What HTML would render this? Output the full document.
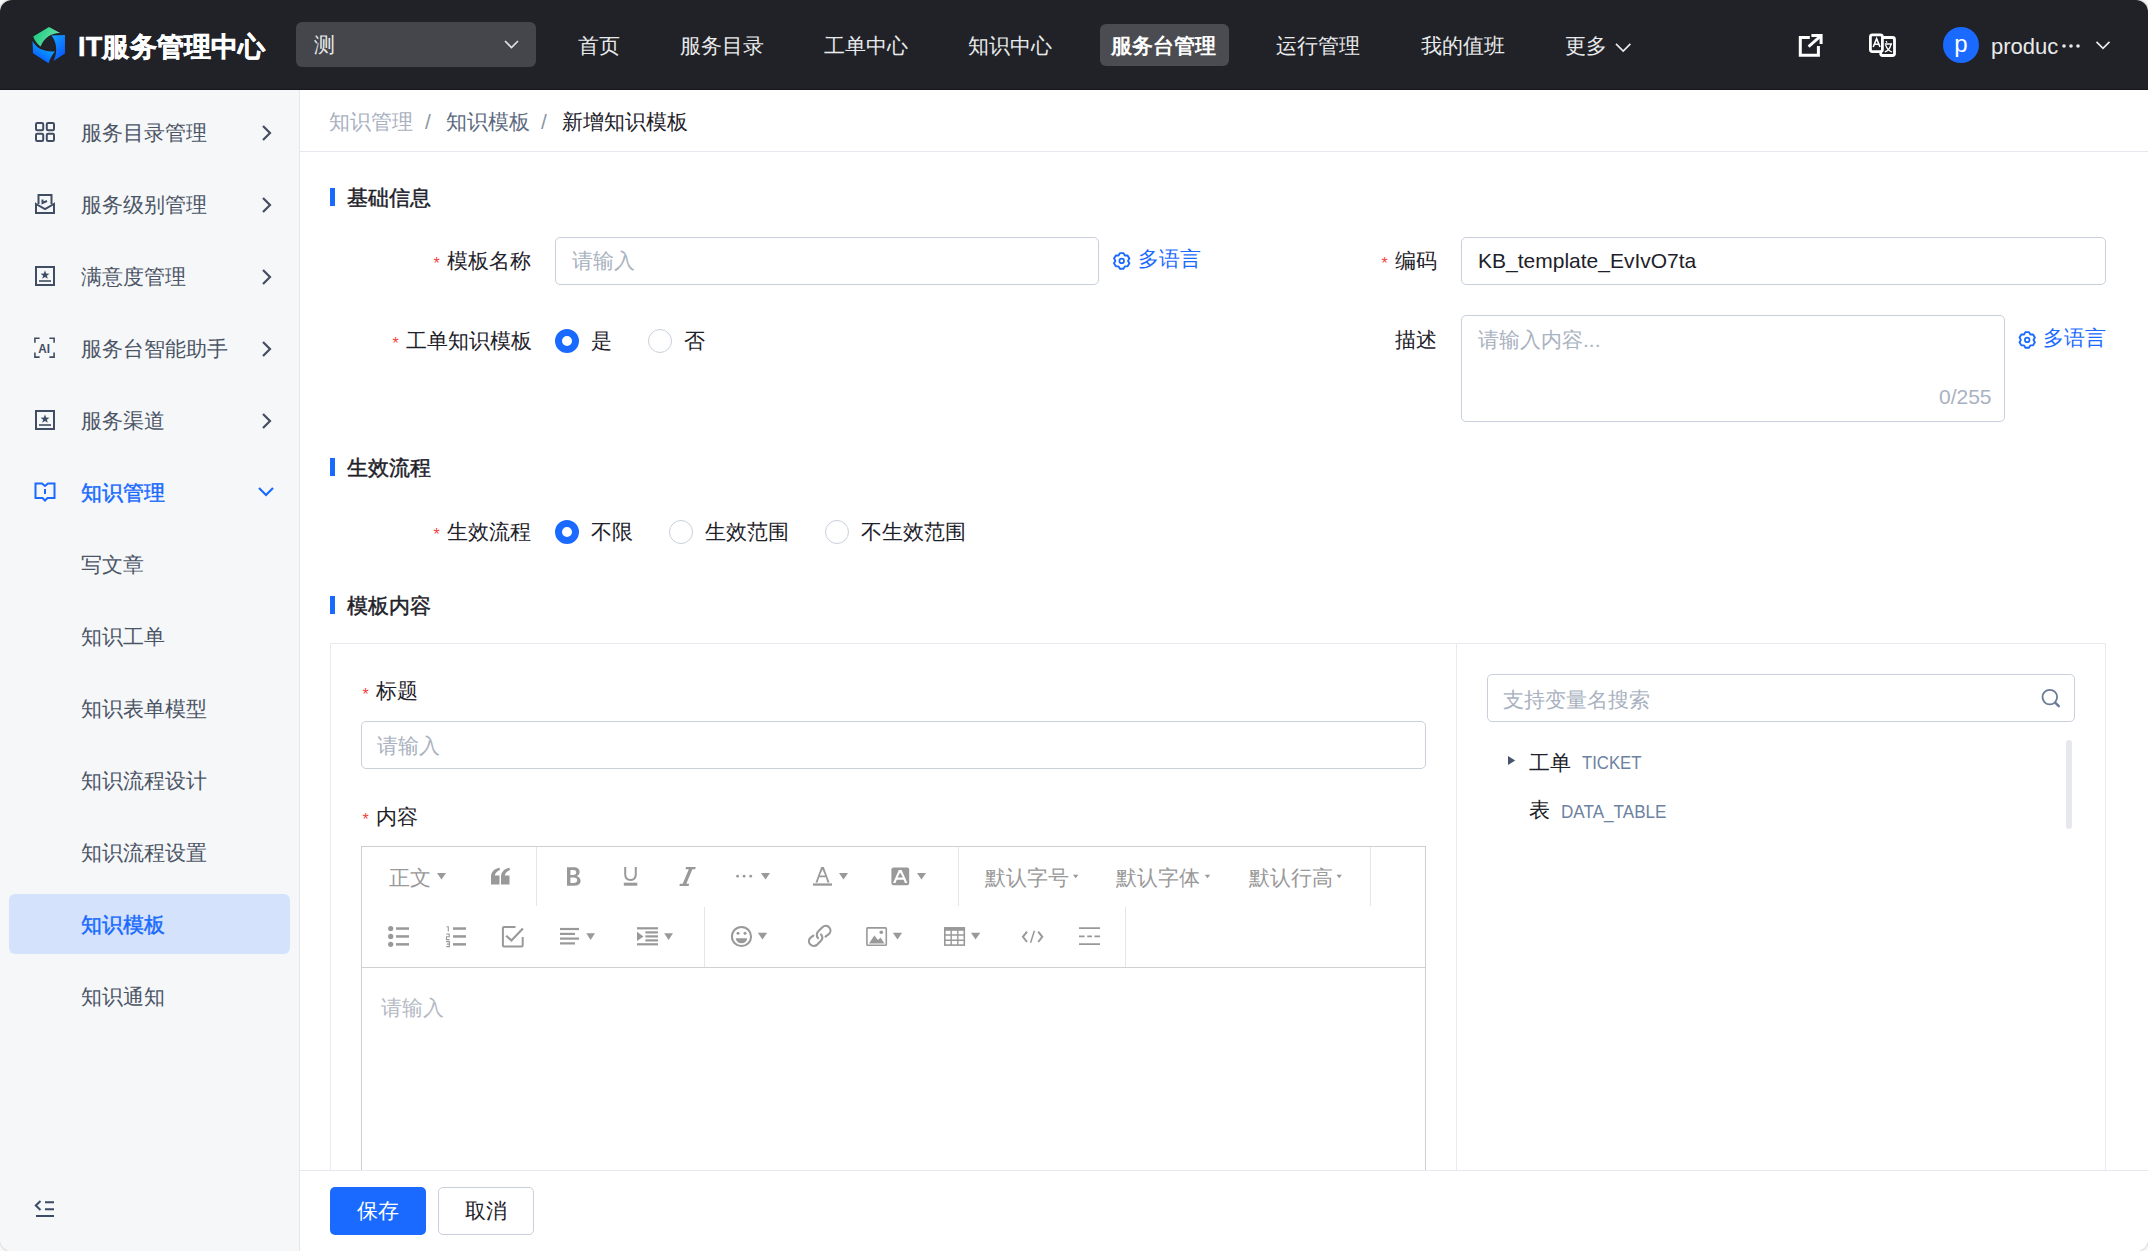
<!DOCTYPE html>
<html><head><meta charset="utf-8">
<style>
*{box-sizing:border-box;margin:0;padding:0}
html,body{width:2148px;height:1251px;overflow:hidden;background:#f8f8f8}
body{font-family:"Liberation Sans",sans-serif;font-size:21px;color:#1d2129}
.win{position:absolute;left:0;top:0;width:2148px;height:1251px;border-radius:12px;overflow:hidden;background:#fff;box-shadow:0 0 1.5px 1px rgba(0,0,0,0.14)}
.a{position:absolute;white-space:nowrap}
.t{height:30px;line-height:30px}
/* header */
.hdr{position:absolute;left:0;top:0;width:2148px;height:90px;background:#212227;border-bottom:1px solid #17181b}
.nav{color:#e9eaec}
.side{position:absolute;left:0;top:90px;width:300px;height:1161px;background:#f6f7f9;border-right:1px solid #e4e7ec}
.si{color:#4b5566}
.blue{color:#1a6aff}
.lbl{color:#1d2129}
.req{color:#f53f3f;font-size:16px;transform:translate(1.5px,2.5px)}
.inp{border:1px solid #c9d0db;border-radius:5px;background:#fff}
.ph{color:#a9b2c0}
.sec-bar{position:absolute;width:5px;height:18px;background:#1a6aff}
.sec-t{color:#1d2129;-webkit-text-stroke:0.45px #1d2129}
.med{-webkit-text-stroke:0.45px #1a6aff}
.radio{position:absolute;width:24px;height:24px;border-radius:50%;border:1px solid #c9d0db;background:#fff}
.radio.on{border:7px solid #1a6aff}
.tb{color:#999;font-size:20.5px}
</style></head><body>
<div class="win">

<!-- HEADER -->
<div class="hdr">
  <svg class="a" style="left:32px;top:27px" width="34" height="37" viewBox="0 0 34 37">
    <defs>
      <linearGradient id="g1" x1="0" y1="0.3" x2="1" y2="0.7"><stop offset="0" stop-color="#1ccb7c"/><stop offset="1" stop-color="#74e4b4"/></linearGradient>
      <linearGradient id="g2" x1="0" y1="0" x2="0.6" y2="1"><stop offset="0" stop-color="#15a6ff"/><stop offset="1" stop-color="#0a58ff"/></linearGradient>
      <linearGradient id="g3" x1="0.8" y1="0.2" x2="0.3" y2="1"><stop offset="0" stop-color="#10b0ff"/><stop offset="1" stop-color="#0552ff"/></linearGradient>
    </defs>
    <path d="M1.2,9.5 L17,0 L28.2,6 C20,5.6 12,10.5 8.6,19.6 C5.2,17 2.6,13.5 1.2,9.5Z" fill="url(#g1)"/>
    <path d="M19.4,8.4 L33,8 V26.6 L21.4,34 C25.6,26 25.2,15 19.4,8.4Z" fill="url(#g2)"/>
    <path d="M0.5,14 C4,21 12,25.2 22.8,24.4 C20,28 17.8,32 16.6,36.2 L1,26.2Z" fill="url(#g3)"/>
  </svg>
  <div class="a" style="left:78px;top:27.5px;height:38px;line-height:38px;font-size:27px;font-weight:700;color:#fff;letter-spacing:0.2px;-webkit-text-stroke:0.5px #fff">IT服务管理中心</div>
  <div class="a" style="left:296px;top:22px;width:240px;height:45px;border-radius:6px;background:#45464b"></div>
  <div class="a nav t" style="left:314px;top:30px">测</div>
  <svg class="a" style="left:500px;top:36px" width="24" height="18" viewBox="500 36 24 18"><path d="M505,41 L511.5,47.5 L518,41" fill="none" stroke="#e1e2e5" stroke-width="1.7"/></svg>

  <div class="a nav t" style="left:578px;top:31px">首页</div>
  <div class="a nav t" style="left:680px;top:31px">服务目录</div>
  <div class="a nav t" style="left:824px;top:31px">工单中心</div>
  <div class="a nav t" style="left:968px;top:31px">知识中心</div>
  <div class="a" style="left:1100px;top:24px;width:129px;height:42px;border-radius:6px;background:#4b4c51"></div>
  <div class="a t" style="left:1111px;top:31px;color:#fff;font-weight:700">服务台管理</div>
  <div class="a nav t" style="left:1276px;top:31px">运行管理</div>
  <div class="a nav t" style="left:1421px;top:31px">我的值班</div>
  <div class="a nav t" style="left:1565px;top:31px">更多</div>
  <svg class="a" style="left:1612px;top:38px" width="24" height="18" viewBox="1612 38 24 18"><path d="M1616,43.8 L1623.2,51 L1630.4,43.8" fill="none" stroke="#e9eaec" stroke-width="1.7"/></svg>

  <svg class="a" style="left:1795px;top:30px" width="32" height="30" viewBox="1795 30 32 30"><path d="M1809.8,37.4 H1800.3 V55.3 H1818.4 V45.9" fill="none" stroke="#fff" stroke-width="3"/><path d="M1811.4,35.4 H1821.1 V43.9" fill="none" stroke="#fff" stroke-width="3"/><path d="M1808.6,46.6 L1820.2,36.4" fill="none" stroke="#fff" stroke-width="2.8"/></svg>
  <svg class="a" style="left:1866px;top:31px" width="33" height="28" viewBox="1866 31 33 28">
    <rect x="1880.7" y="37.5" width="13.8" height="18" rx="2" fill="#212227" stroke="#fff" stroke-width="2.8"/>
    <path d="M1886,41.2 L1887,42.6 M1884.8,44 H1892 M1885.6,45 C1887,49 1889,51 1892,52 M1891,44.5 C1890,48.5 1888,50.8 1884.8,51.8" fill="none" stroke="#fff" stroke-width="1.3"/>
    <rect x="1870.4" y="34.8" width="12" height="16.8" rx="2" fill="#212227" stroke="#fff" stroke-width="2.8"/>
    <path d="M1873.2,47 L1876.6,38.6 L1880,47 M1874.4,44.2 H1878.8" fill="none" stroke="#fff" stroke-width="1.6"/>
  </svg>
  <div class="a" style="left:1943px;top:27px;width:36px;height:36px;border-radius:50%;background:#1a6aff;color:#fff;text-align:center;line-height:33px;font-size:24px">p</div>
  <div class="a nav" style="left:1991px;top:30px;height:34px;line-height:34px;font-size:22px">produc</div>
  <svg class="a" style="left:2058px;top:40px" width="26" height="12" viewBox="2058 40 26 12"><circle cx="2064" cy="46" r="1.8" fill="#e9eaec"/><circle cx="2071" cy="46" r="1.8" fill="#e9eaec"/><circle cx="2078" cy="46" r="1.8" fill="#e9eaec"/></svg>
  <svg class="a" style="left:2094px;top:38px" width="18" height="13" viewBox="2094 38 18 13"><path d="M2096.5,41.8 L2103,48.3 L2109.5,41.8" fill="none" stroke="#e9eaec" stroke-width="1.7"/></svg>
</div>

<!-- SIDEBAR -->
<div class="side"></div>
<!-- sidebar items -->
<svg class="a" style="left:35px;top:122px" width="20" height="20" viewBox="0 0 20 20" fill="none" stroke="#414d63" stroke-width="2"><rect x="1" y="1" width="7.2" height="7.2" rx="1.3"/><rect x="11.8" y="1" width="7.2" height="7.2" rx="1.3"/><rect x="1" y="11.8" width="7.2" height="7.2" rx="1.3"/><rect x="11.8" y="11.8" width="7.2" height="7.2" rx="1.3"/></svg>
<div class="a si t" style="left:81px;top:118px">服务目录管理</div>
<svg class="a chev" style="left:260px;top:124px" width="13" height="18" viewBox="0 0 13 18"><path d="M3 2 L10 9 L3 16" fill="none" stroke="#414d63" stroke-width="2.2"/></svg>

<svg class="a" style="left:35px;top:194px" width="20" height="20" viewBox="0 0 20 20" fill="none" stroke="#414d63" stroke-width="2"><path d="M3.5 10 V1 H16.5 V10"/><path d="M1 10 L10 15 L19 10 V19 H1 Z"/><path d="M7.5 5.5 V9 L12 7" /></svg>
<div class="a si t" style="left:81px;top:190px">服务级别管理</div>
<svg class="a chev" style="left:260px;top:196px" width="13" height="18" viewBox="0 0 13 18"><path d="M3 2 L10 9 L3 16" fill="none" stroke="#414d63" stroke-width="2.2"/></svg>

<svg class="a" style="left:35px;top:266px" width="20" height="20" viewBox="0 0 20 20"><rect x="1" y="1" width="18" height="18" fill="none" stroke="#414d63" stroke-width="2"/><path d="M10 4.5 L11.2 7.6 L14.4 7.7 L11.9 9.7 L12.8 12.8 L10 11 L7.2 12.8 L8.1 9.7 L5.6 7.7 L8.8 7.6Z" fill="#414d63"/><path d="M4 15 H16" stroke="#414d63" stroke-width="1.6"/></svg>
<div class="a si t" style="left:81px;top:262px">满意度管理</div>
<svg class="a chev" style="left:260px;top:268px" width="13" height="18" viewBox="0 0 13 18"><path d="M3 2 L10 9 L3 16" fill="none" stroke="#414d63" stroke-width="2.2"/></svg>

<svg class="a" style="left:34px;top:337px" width="22" height="22" viewBox="0 0 22 22" fill="none" stroke="#414d63" stroke-width="1.6"><path d="M0.9 5.8 V1.2 H5.6 M15.4 1.2 H20.1 V5.8 M20.1 15.4 V20.1 H15.4 M5.6 20.1 H0.9 V15.4"/><text x="4.2" y="15.9" font-size="13.5" font-weight="700" fill="#414d63" stroke="none" font-family="Liberation Sans" textLength="11.7" lengthAdjust="spacingAndGlyphs">AI</text></svg>
<div class="a si t" style="left:81px;top:334px">服务台智能助手</div>
<svg class="a chev" style="left:260px;top:340px" width="13" height="18" viewBox="0 0 13 18"><path d="M3 2 L10 9 L3 16" fill="none" stroke="#414d63" stroke-width="2.2"/></svg>

<svg class="a" style="left:35px;top:410px" width="20" height="20" viewBox="0 0 20 20"><rect x="1" y="1" width="18" height="18" fill="none" stroke="#414d63" stroke-width="2"/><path d="M10 4.5 L11.2 7.6 L14.4 7.7 L11.9 9.7 L12.8 12.8 L10 11 L7.2 12.8 L8.1 9.7 L5.6 7.7 L8.8 7.6Z" fill="#414d63"/><path d="M4 15 H16" stroke="#414d63" stroke-width="1.6"/></svg>
<div class="a si t" style="left:81px;top:406px">服务渠道</div>
<svg class="a chev" style="left:260px;top:412px" width="13" height="18" viewBox="0 0 13 18"><path d="M3 2 L10 9 L3 16" fill="none" stroke="#414d63" stroke-width="2.2"/></svg>

<svg class="a" style="left:34px;top:482px" width="22" height="20" viewBox="0 0 22 20" fill="none" stroke="#1a6aff" stroke-width="2"><path d="M1.5 1.5 H8 L11 4 L14 1.5 H20.5 V16 H13.5 L11 18.5 L8.5 16 H1.5 Z"/><path d="M11 7 V12"/></svg>
<div class="a t blue med" style="left:81px;top:478px">知识管理</div>
<svg class="a" style="left:257px;top:485px" width="18" height="14" viewBox="0 0 18 14"><path d="M2 3 L9 10 L16 3" fill="none" stroke="#1a6aff" stroke-width="2.2"/></svg>

<div class="a si t" style="left:81px;top:550px">写文章</div>
<div class="a si t" style="left:81px;top:622px">知识工单</div>
<div class="a si t" style="left:81px;top:694px">知识表单模型</div>
<div class="a si t" style="left:81px;top:766px">知识流程设计</div>
<div class="a si t" style="left:81px;top:838px">知识流程设置</div>
<div class="a" style="left:9px;top:894px;width:281px;height:60px;border-radius:6px;background:#d4e3fb"></div>
<div class="a t blue med" style="left:81px;top:910px">知识模板</div>
<div class="a si t" style="left:81px;top:982px">知识通知</div>

<svg class="a" style="left:30px;top:1195px" width="30" height="26" viewBox="30 1195 30 26" fill="none" stroke="#3b4a66" stroke-width="2"><path d="M40.5,1201 L35.8,1205.5 L40.5,1210"/><path d="M45,1202.2 H54 M45,1209.2 H54 M36,1216 H54"/></svg>

<!-- MAIN -->
<div class="a" style="left:300px;top:151px;width:1848px;height:1px;background:#e5e8ee"></div>
<div class="a t" style="left:329px;top:107px;color:#a9b1bf">知识管理</div>
<div class="a t" style="left:425px;top:107px;color:#8d96a5">/</div>
<div class="a t" style="left:446px;top:107px;color:#5d6a7e">知识模板</div>
<div class="a t" style="left:541px;top:107px;color:#8d96a5">/</div>
<div class="a t" style="left:562px;top:107px;color:#1d2129">新增知识模板</div>

<!-- section 1 -->
<div class="sec-bar" style="left:330px;top:188px"></div>
<div class="a t sec-t" style="left:347px;top:183px">基础信息</div>

<div class="a t req" style="left:432px;top:246px">*</div>
<div class="a t lbl" style="left:447px;top:246px">模板名称</div>
<div class="a inp" style="left:555px;top:237px;width:544px;height:48px"></div>
<div class="a t ph" style="left:572px;top:246px">请输入</div>
<svg class="a" style="left:1111px;top:250px" width="22" height="22" viewBox="1111 250 22 22"><path d="M1119.90,253.11 L1123.50,253.11 L1124.85,255.44 L1127.55,255.44 L1129.35,258.56 L1128.00,260.90 L1129.35,263.24 L1127.55,266.36 L1124.85,266.36 L1123.50,268.69 L1119.90,268.69 L1118.55,266.36 L1115.85,266.36 L1114.05,263.24 L1115.40,260.90 L1114.05,258.56 L1115.85,255.44 L1118.55,255.44Z" fill="none" stroke="#1a6aff" stroke-width="1.9" stroke-linejoin="round"/><circle cx="1121.7" cy="260.9" r="2.3" fill="none" stroke="#1a6aff" stroke-width="1.7"/></svg>
<div class="a t blue" style="left:1138px;top:244px">多语言</div>

<div class="a t req" style="left:1380px;top:246px">*</div>
<div class="a t lbl" style="left:1395px;top:246px">编码</div>
<div class="a inp" style="left:1461px;top:237px;width:645px;height:48px"></div>
<div class="a t lbl" style="left:1478px;top:246px">KB_template_EvIvO7ta</div>

<div class="a t req" style="left:391px;top:326px">*</div>
<div class="a t lbl" style="left:406px;top:326px">工单知识模板</div>
<div class="radio on" style="left:555px;top:329px"></div>
<div class="a t lbl" style="left:591px;top:326px">是</div>
<div class="radio" style="left:648px;top:329px"></div>
<div class="a t lbl" style="left:684px;top:326px">否</div>

<div class="a t lbl" style="left:1395px;top:325px">描述</div>
<div class="a inp" style="left:1461px;top:315px;width:544px;height:107px"></div>
<div class="a t ph" style="left:1478px;top:325px">请输入内容...</div>
<div class="a t ph" style="left:1939px;top:382px">0/255</div>
<svg class="a" style="left:2016px;top:329px" width="22" height="22" viewBox="2016 329 22 22"><path d="M2025.40,332.11 L2029.00,332.11 L2030.35,334.44 L2033.05,334.44 L2034.85,337.56 L2033.50,339.90 L2034.85,342.24 L2033.05,345.36 L2030.35,345.36 L2029.00,347.69 L2025.40,347.69 L2024.05,345.36 L2021.35,345.36 L2019.55,342.24 L2020.90,339.90 L2019.55,337.56 L2021.35,334.44 L2024.05,334.44Z" fill="none" stroke="#1a6aff" stroke-width="1.9" stroke-linejoin="round"/><circle cx="2027.2" cy="339.9" r="2.3" fill="none" stroke="#1a6aff" stroke-width="1.7"/></svg>
<div class="a t blue" style="left:2043px;top:323px">多语言</div>

<!-- section 2 -->
<div class="sec-bar" style="left:330px;top:458px"></div>
<div class="a t sec-t" style="left:347px;top:453px">生效流程</div>
<div class="a t req" style="left:432px;top:517px">*</div>
<div class="a t lbl" style="left:447px;top:517px">生效流程</div>
<div class="radio on" style="left:555px;top:520px"></div>
<div class="a t lbl" style="left:591px;top:517px">不限</div>
<div class="radio" style="left:669px;top:520px"></div>
<div class="a t lbl" style="left:705px;top:517px">生效范围</div>
<div class="radio" style="left:825px;top:520px"></div>
<div class="a t lbl" style="left:861px;top:517px">不生效范围</div>

<!-- section 3 -->
<div class="sec-bar" style="left:330px;top:596px"></div>
<div class="a t sec-t" style="left:347px;top:591px">模板内容</div>

<div class="a" style="left:330px;top:643px;width:1776px;height:700px;border:1px solid #e8eaef"></div>
<div class="a" style="left:1456px;top:643px;width:1px;height:600px;background:#e8eaef"></div>

<div class="a t req" style="left:361px;top:677px">*</div>
<div class="a t lbl" style="left:376px;top:676px">标题</div>
<div class="a inp" style="left:361px;top:721px;width:1065px;height:48px"></div>
<div class="a t ph" style="left:377px;top:731px">请输入</div>
<div class="a t req" style="left:361px;top:802px">*</div>
<div class="a t lbl" style="left:376px;top:802px">内容</div>

<!-- editor -->
<div id="editor" class="a" style="left:361px;top:846px;width:1065px;height:500px;border:1px solid #cfcfcf"></div>
<div class="a" style="left:362px;top:967px;width:1063px;height:1px;background:#d0d0d0"></div>
<div class="a" style="left:536px;top:847px;width:1px;height:59px;background:#e6e6e6"></div>
<div class="a" style="left:958px;top:847px;width:1px;height:59px;background:#e6e6e6"></div>
<div class="a" style="left:1370px;top:847px;width:1px;height:59px;background:#e6e6e6"></div>
<div class="a" style="left:704px;top:907px;width:1px;height:60px;background:#e6e6e6"></div>
<div class="a" style="left:1125px;top:907px;width:1px;height:60px;background:#e6e6e6"></div>
<div class="a t tb" style="left:389px;top:862.5px">正文</div>
<div class="a t tb" style="left:985px;top:862.5px">默认字号</div>
<div class="a t tb" style="left:1116px;top:862.5px">默认字体</div>
<div class="a t tb" style="left:1249px;top:862.5px">默认行高</div>
<svg class="a" style="left:0;top:0;pointer-events:none" width="2148" height="1251" viewBox="0 0 2148 1251">
<g fill="#999">
  <path d="M437,873 H446 L441.5,879.6Z"/>
  <path d="M491,884.6 V877 C491,872 494,869 499.5,867.8 L500,870 C497,871 495.3,873 494.8,875.5 H499.5 V884.6Z"/>
  <path d="M501,884.6 V877 C501,872 504,869 509.5,867.8 L510,870 C507,871 505.3,873 504.8,875.5 H509.5 V884.6Z"/>
  <path fill-rule="evenodd" d="M567,867.3 H573.8 C577.6,867.3 579.6,869.3 579.6,872 C579.6,874.2 578.3,875.6 576.6,876.1 C579,876.6 580.6,878.5 580.6,881 C580.6,884 578.2,885.7 574.2,885.7 H567Z M570.4,870.1 V874.9 H573.2 C575.2,874.9 576.3,874 576.3,872.5 C576.3,870.9 575.2,870.1 573.2,870.1Z M570.4,877.5 V882.9 H573.6 C575.9,882.9 577.2,882 577.2,880.2 C577.2,878.4 575.9,877.5 573.6,877.5Z"/>
  <rect x="623.8" y="882.7" width="13.5" height="3"/>
  <path d="M686,867 H695.7 L695.2,869.2 H692.4 L686.3,883.8 H689.1 L688.6,886 H679.4 L679.9,883.8 H682.7 L688.8,869.2 H685.5Z"/>
  <circle cx="737.6" cy="876.2" r="1.4"/><circle cx="744.1" cy="876.2" r="1.4"/><circle cx="750.7" cy="876.2" r="1.4"/>
  <path d="M761,873 H770 L765.5,879.6Z"/>
  <rect x="813" y="883.4" width="19" height="2.3"/>
  <path fill-rule="evenodd" d="M821.2,867 H823.8 L829.5,882.6 H827.4 L825.8,877.2 H819.2 L817.6,882.6 H815.5Z M822.5,869.4 L819.8,875.6 H825.2Z"/>
  <path d="M839,873 H848 L843.5,879.6Z"/>
  <rect x="891.4" y="867.4" width="17.8" height="17.8" rx="2.2"/>
  <path fill="#fff" fill-rule="evenodd" d="M898.8,870 H901.6 L907.4,883 H904.9 L903.6,879.7 H896.8 L895.5,883 H893Z M900.2,872.6 L897.5,877.6 H902.9Z"/>
  <path d="M917,873 H926 L921.5,879.6Z"/>
  <path d="M1073,874.8 H1078.4 L1075.7,878.2Z"/>
  <path d="M1204.8,874.8 H1210.2 L1207.5,878.2Z"/>
  <path d="M1336.5,874.8 H1341.9 L1339.2,878.2Z"/>
  <!-- row 2 -->
  <circle cx="390.7" cy="928.5" r="2.6"/><circle cx="390.7" cy="936.4" r="2.6"/><circle cx="390.7" cy="944.3" r="2.6"/>
  <rect x="396" y="927.3" width="13" height="2.5"/><rect x="396" y="935.2" width="13" height="2.5"/><rect x="396" y="943.1" width="13" height="2.5"/>
  <rect x="453" y="927.3" width="13" height="2.5"/><rect x="453" y="935.2" width="13" height="2.5"/><rect x="453" y="943.1" width="13" height="2.5"/>
  <rect x="560" y="927.9" width="19" height="2.2"/><rect x="560" y="932.8" width="15" height="2.2"/><rect x="560" y="937.5" width="19" height="2.2"/><rect x="560" y="942.3" width="15" height="2.2"/>
  <path d="M586.3,933.2 H595 L590.6,939.9Z"/>
  <rect x="637" y="927.2" width="21" height="2.2"/><rect x="645.4" y="931.3" width="12.6" height="2.2"/><rect x="645.4" y="935.3" width="12.6" height="2.2"/><rect x="645.4" y="939.3" width="12.6" height="2.2"/><rect x="637" y="943.2" width="21" height="2.2"/>
  <path d="M637,931.8 L643.5,936.4 L637,941Z"/>
  <path d="M664.2,933.2 H673 L668.6,939.9Z"/>
  <circle cx="738" cy="933.3" r="1.5"/><circle cx="745" cy="933.3" r="1.5"/>
  <path d="M735.8,938.3 H747.2 C746.8,941.6 744.6,943.3 741.5,943.3 C738.4,943.3 736.2,941.6 735.8,938.3Z"/>
  <path d="M757.8,932.8 H767.2 L762.5,939.5Z"/>
  <path d="M869,943.5 L874.3,935.5 L878,940 L880.5,937.5 L884.5,943.5Z"/>
  <circle cx="881.3" cy="932.3" r="1.8"/>
  <path d="M892.8,932.8 H902.1 L897.5,939.5Z"/>
  <rect x="944" y="927.2" width="21" height="3.6"/>
  <path d="M971,932.8 H980.2 L975.6,939.5Z"/>
</g>
<g fill="none" stroke="#999">
  <path d="M625.2,867 V874.3 C625.2,877.9 627.2,880 630.5,880 C633.8,880 635.8,877.9 635.8,874.3 V867" stroke-width="2"/>
  
  
  <path d="M446.6,926.8 H448.3 V931.6" stroke-width="1.1"/>
  <path d="M446.2,934 H449.2 V936.8 H446.5 V939.6 H449.6" stroke-width="1.1"/>
  <path d="M446.2,941.6 H449.4 V946.6 H446.2 M446.8,944.1 H449.4" stroke-width="1.1"/>
  <path d="M515.5,927 H504 Q502.9,927 502.9,928.1 V945.5 Q502.9,946.6 504,946.6 H521.6 Q522.7,946.6 522.7,945.5 V937" stroke-width="2"/>
  <path d="M506.2,935.8 L511.4,940.4 L522.9,928.6" stroke-width="2.2"/>
  <circle cx="741.5" cy="936.5" r="9.6" stroke-width="2"/>
  <path d="M818,938.2 C816.2,935.8 816.6,933 818.8,930.8 L822.4,927.2 C824.6,925.2 827.6,925.4 829.4,927.6 C831,929.6 830.8,932.4 828.8,934.2 L825.5,936.6 M821,934.3 C822.8,936.5 822.6,939.2 820.5,941.3 L817.2,944.6 C815,946.6 811.8,946.4 810,944.2 C808.4,942.2 808.6,939.4 810.6,937.6 L813.4,935.6" stroke-width="2.1" stroke-linecap="round"/>
  <rect x="866.9" y="927.9" width="19.4" height="17.4" rx="0.8" stroke-width="1.6"/>
  <rect x="944.8" y="928" width="19.5" height="17.1" stroke-width="1.6"/>
  <path d="M944.8,935 H964.3 M944.8,940.2 H964.3 M951.2,928 V945.1 M957.8,928 V945.1" stroke-width="1.4"/>
  <path d="M1027,931.6 L1022.9,936.8 L1027,942 M1038.2,931.6 L1042.3,936.8 L1038.2,942" stroke-width="2"/>
  <path d="M1034.4,930.8 L1030.6,942.8" stroke-width="1.5"/>
  <path d="M1079,928.1 H1100 M1079,944.1 H1100 M1079,936.4 H1084.6 M1087.2,936.4 H1092 M1094.4,936.4 H1100" stroke-width="1.8"/>
</g>
</svg>

<div class="a t ph" style="left:381px;top:993px;color:#b4bac4">请输入</div>

<!-- right panel -->
<div class="a inp" style="left:1487px;top:674px;width:588px;height:48px"></div>
<div class="a t ph" style="left:1503px;top:685px">支持变量名搜索</div>
<svg class="a" style="left:2038px;top:685px" width="26" height="26" viewBox="2038 685 26 26" fill="none" stroke="#6a7b96" stroke-width="1.8"><circle cx="2049.8" cy="697.1" r="7.3"/><path d="M2055.4,702.8 L2058.8,706.2" stroke-width="2.4" stroke-linecap="round"/></svg>
<svg class="a" style="left:1506px;top:754px" width="12" height="13" viewBox="1506 754 12 13"><path d="M1508,756 L1515.2,760.5 L1508,765Z" fill="#47556c"/></svg>
<div class="a t lbl" style="left:1529px;top:748px">工单</div>
<div class="a t" style="left:1582px;top:748px;color:#6d82a1;font-size:19px;transform:scaleX(0.88);transform-origin:0 0">TICKET</div>
<div class="a t lbl" style="left:1529px;top:795px">表</div>
<div class="a t" style="left:1561px;top:797px;color:#6d82a1;font-size:19px;transform:scaleX(0.9);transform-origin:0 0">DATA_TABLE</div>
<div class="a" style="left:2066px;top:740px;width:6px;height:89px;border-radius:3px;background:#e6e8ee"></div>

<!-- footer -->
<div class="a" style="left:300px;top:1170px;width:1848px;height:81px;background:#fff;border-top:1px solid #e5e8ee"></div>
<div class="a" style="left:330px;top:1187px;width:96px;height:48px;border-radius:5px;background:#1a6aff;color:#fff;text-align:center;line-height:48px">保存</div>
<div class="a" style="left:438px;top:1187px;width:96px;height:48px;border-radius:5px;background:#fff;border:1px solid #c9d0db;color:#1d2129;text-align:center;line-height:46px">取消</div>

</div>
</body></html>
